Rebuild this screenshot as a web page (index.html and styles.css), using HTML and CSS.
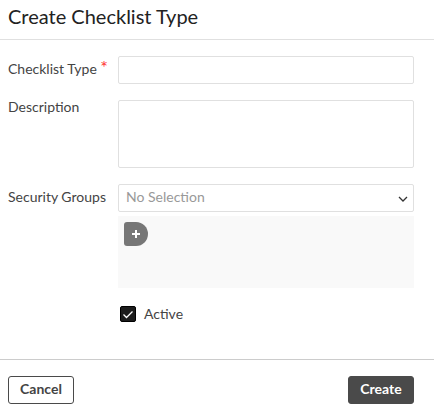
FILE: index.html
```html
<!DOCTYPE html>
<html lang="en">
<head>
    <meta charset="UTF-8">
    <meta name="viewport" content="width=device-width, initial-scale=1.0">
    <title>Create Checklist Type</title>
    <link rel="stylesheet" href="styles.css">
</head>
<body>
    <form class="dialog">
        <header class="dialog-header">
            <h1>Create Checklist Type</h1>
        </header>

        <div class="dialog-body">
            <div class="field">
                <label for="checklistType">Checklist Type <span class="required">*</span></label>
                <input class="control" type="text" id="checklistType" required>
            </div>

            <div class="field field-multiline">
                <label for="description">Description</label>
                <textarea class="control" id="description"></textarea>
            </div>

            <div class="field">
                <label for="securityGroups">Security Groups</label>
                <div class="groups">
                    <div class="select-wrap">
                        <select class="control" id="securityGroups">
                            <option>No Selection</option>
                        </select>
                        <svg class="chevron" width="10" height="6" viewBox="0 0 10 6" aria-hidden="true">
                            <path d="M1 1l4 4 4-4" fill="none" stroke="#333" stroke-width="1.3"/>
                        </svg>
                    </div>
                    <div class="group-list">
                        <button class="add-button" type="button" aria-label="Add security group">
                            <svg width="8" height="8" viewBox="0 0 8 8" aria-hidden="true">
                                <path d="M4 0v8M0 4h8" stroke="#fff" stroke-width="2"/>
                            </svg>
                        </button>
                    </div>
                </div>
            </div>

            <div class="check-row">
                <input type="checkbox" id="active" checked>
                <label for="active">Active</label>
            </div>
        </div>

        <footer class="dialog-footer">
            <button class="btn" type="button">Cancel</button>
            <button class="btn btn-primary" type="submit">Create</button>
        </footer>
    </form>
</body>
</html>
```

FILE: styles.css
```css
* {
    box-sizing: border-box;
}

body {
    margin: 0;
    background: #fff;
    color: #444;
    font-family: Lato, "Liberation Sans", sans-serif;
    font-size: 14px;
    line-height: 20px;
}

input,
textarea,
select,
button {
    font: inherit;
    color: inherit;
}

.dialog {
    margin-right: 3px;
}

.dialog-header {
    padding: 2px 8px 9px;
    border-bottom: 1px solid #e0e0e0;
}

.dialog-header h1 {
    margin: 0;
    color: #222;
    font-size: 20px;
    font-weight: 400;
    line-height: 28px;
}

.dialog-body {
    display: flex;
    flex-direction: column;
    gap: 16px;
    padding: 16px 20px 35px 8px;
}

.field {
    display: grid;
    grid-template-columns: 110px 1fr;
    align-items: start;
}

.field label {
    padding-top: 6px;
    line-height: 14px;
}

.field-multiline label {
    padding-top: 0;
}

.required {
    color: #f33;
    font-size: 18px;
    line-height: 1px;
}

.control {
    display: block;
    width: 100%;
    height: 28px;
    margin: 0;
    padding: 2px 7px;
    background: #fff;
    border: 1px solid #e0e0e0;
    border-radius: 2px;
}

textarea.control {
    height: 68px;
    resize: none;
}

.select-wrap {
    position: relative;
}

select.control {
    appearance: none;
    padding: 0 7px 2px;
    color: #999;
}

/* Arrow drawn over the native select */
.chevron {
    position: absolute;
    top: 12px;
    right: 6px;
    pointer-events: none;
}

.group-list {
    min-height: 72px;
    margin-top: 4px;
    padding: 6px;
    background: #f9f9f9;
}

.add-button {
    display: flex;
    align-items: center;
    justify-content: center;
    width: 24px;
    height: 24px;
    padding: 0;
    background: #777;
    border: 0;
    border-radius: 3px 12px 12px 3px;
}

.check-row {
    display: flex;
    align-items: center;
    gap: 8px;
    padding-left: 112px;
}

.check-row input {
    appearance: none;
    width: 16px;
    height: 16px;
    margin: 0;
    background: #1c1c1c url("data:image/svg+xml,%3Csvg xmlns='http://www.w3.org/2000/svg' viewBox='0 0 14 14'%3E%3Cpath d='M2.5 7.5l3 3 6-6' fill='none' stroke='%23fff' stroke-width='1.3'/%3E%3C/svg%3E") center / 14px no-repeat;
    border: 1px solid #000;
    border-radius: 2px;
}

.dialog-footer {
    display: flex;
    justify-content: space-between;
    padding: 16px 20px 8px 8px;
    border-top: 1px solid #ccc;
}

.btn {
    min-width: 66px;
    height: 28px;
    padding: 0 11px 2px;
    background: #fff;
    border: 1px solid #4a4a4a;
    border-radius: 3px;
    font-weight: 700;
}

.btn-primary {
    background: #4a4a4a;
    color: #fff;
}
```
